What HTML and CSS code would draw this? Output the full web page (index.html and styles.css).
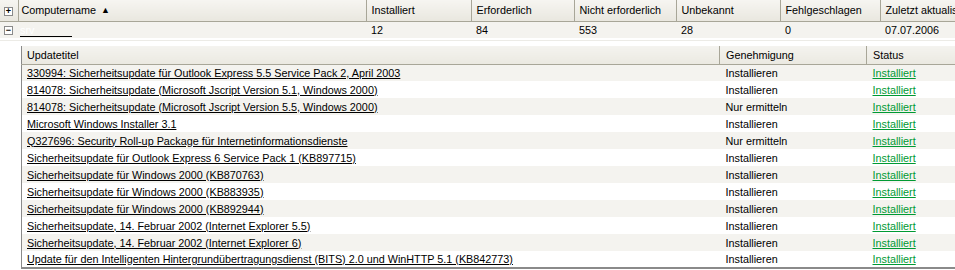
FILE: index.html
```html
<!DOCTYPE html>
<html lang="de">

<head>
  <meta charset="UTF-8">
  <title>Computer</title>
  <link rel="stylesheet" href="styles.css">
</head>

<body>
  <table class="grid">
    <colgroup>
      <col class="c-icon">
      <col class="c-name">
      <col class="c-inst">
      <col class="c-req">
      <col class="c-notreq">
      <col class="c-unknown">
      <col class="c-failed">
      <col class="c-date">
    </colgroup>
    <thead>
      <tr>
        <th class="icon"><span class="box">+</span></th>
        <th>Computername<span class="sort">&#9650;</span></th>
        <th>Installiert</th>
        <th>Erforderlich</th>
        <th>Nicht erforderlich</th>
        <th>Unbekannt</th>
        <th>Fehlgeschlagen</th>
        <th>Zuletzt aktualisiert</th>
      </tr>
    </thead>
    <tbody>
      <tr class="computer">
        <td class="icon"><span class="box">&minus;</span></td>
        <td><a class="hidden-name" href="#">srv</a></td>
        <td>12</td>
        <td>84</td>
        <td>553</td>
        <td>28</td>
        <td>0</td>
        <td>07.07.2006</td>
      </tr>
    </tbody>
  </table>

  <div class="details">
    <table class="updates">
      <colgroup>
        <col class="u-title">
        <col class="u-approval">
        <col class="u-status">
      </colgroup>
      <thead>
        <tr>
          <th>Updatetitel</th>
          <th>Genehmigung</th>
          <th>Status</th>
        </tr>
      </thead>
      <tbody>
        <tr><td><a href="#">330994: Sicherheitsupdate für Outlook Express 5.5 Service Pack 2, April 2003</a></td><td>Installieren</td><td><a class="ok" href="#">Installiert</a></td></tr>
        <tr><td><a href="#">814078: Sicherheitsupdate (Microsoft Jscript Version 5.1, Windows 2000)</a></td><td>Installieren</td><td><a class="ok" href="#">Installiert</a></td></tr>
        <tr><td><a href="#">814078: Sicherheitsupdate (Microsoft Jscript Version 5.5, Windows 2000)</a></td><td>Nur ermitteln</td><td><a class="ok" href="#">Installiert</a></td></tr>
        <tr><td><a href="#">Microsoft Windows Installer 3.1</a></td><td>Installieren</td><td><a class="ok" href="#">Installiert</a></td></tr>
        <tr><td><a href="#">Q327696: Security Roll-up Package für Internetinformationsdienste</a></td><td>Nur ermitteln</td><td><a class="ok" href="#">Installiert</a></td></tr>
        <tr><td><a href="#">Sicherheitsupdate für Outlook Express 6 Service Pack 1 (KB897715)</a></td><td>Installieren</td><td><a class="ok" href="#">Installiert</a></td></tr>
        <tr><td><a href="#">Sicherheitsupdate für Windows 2000 (KB870763)</a></td><td>Installieren</td><td><a class="ok" href="#">Installiert</a></td></tr>
        <tr><td><a href="#">Sicherheitsupdate für Windows 2000 (KB883935)</a></td><td>Installieren</td><td><a class="ok" href="#">Installiert</a></td></tr>
        <tr><td><a href="#">Sicherheitsupdate für Windows 2000 (KB892944)</a></td><td>Installieren</td><td><a class="ok" href="#">Installiert</a></td></tr>
        <tr><td><a href="#">Sicherheitsupdate, 14. Februar 2002 (Internet Explorer 5.5)</a></td><td>Installieren</td><td><a class="ok" href="#">Installiert</a></td></tr>
        <tr><td><a href="#">Sicherheitsupdate, 14. Februar 2002 (Internet Explorer 6)</a></td><td>Installieren</td><td><a class="ok" href="#">Installiert</a></td></tr>
        <tr><td><a href="#">Update für den Intelligenten Hintergrundübertragungsdienst (BITS) 2.0 und WinHTTP 5.1 (KB842773)</a></td><td>Installieren</td><td><a class="ok" href="#">Installiert</a></td></tr>
      </tbody>
    </table>
  </div>
</body>

</html>
```

FILE: styles.css
```css
* {
  box-sizing: border-box;
}
body {
  width: 955px;
  height: 270px;
  margin: 0;
  overflow: hidden;
  background: #fff;
  color: #000;
  font-family: "Liberation Sans", Arial, sans-serif;
  font-size: 10.8px;
}
a {
  color: #000;
  text-decoration: underline;
}
table {
  border-collapse: collapse;
  table-layout: fixed;
}
th,
td {
  padding: 0 0 0 6px;
  white-space: nowrap;
  overflow: hidden;
  text-align: left;
  font-weight: normal;
}
th {
  background: linear-gradient(#f4f3ef, #ebe9e1);
}
th + th {
  border-left: 1px solid #a8a698;
}

/* computer grid */
.grid {
  width: 1000px;
}
.c-icon { width: 18px; }
.c-name { width: 348px; }
.c-inst { width: 105px; }
.c-req { width: 103px; }
.c-notreq { width: 102px; }
.c-unknown { width: 104px; }
.c-failed { width: 100px; }
.c-date { width: 120px; }
.grid th {
  height: 21px;
  border-bottom: 1px solid #a8a698;
  padding-left: 5px;
  background: linear-gradient(#f6f5f1, #e9e7df);
}
.grid th.icon,
.grid td.icon {
  padding: 0 0 0 4px;
}
.grid th:nth-child(2) {
  padding-left: 3px;
}
.grid td {
  height: 17px;
  padding-left: 5px;
  background: #f4f3ef;
}
.grid td:nth-child(2) {
  padding-left: 2px;
}
.box {
  display: inline-flex;
  align-items: center;
  justify-content: center;
  width: 9px;
  height: 9px;
  border: 1px solid #8a8a8a;
  background: #fff;
  font-size: 9px;
  line-height: 1;
  font-weight: bold;
  color: #000;
  vertical-align: middle;
}
.sort {
  font-size: 9px;
  margin-left: 5px;
  vertical-align: 1px;
}
.hidden-name {
  display: inline-block;
  width: 52px;
  height: 13px;
  color: #fff;
  text-decoration: none;
  border-bottom: 1px solid #000;
  vertical-align: middle;
}

/* update list */
.details {
  margin-top: 2px;
  border-top: 1px solid #ecebe6;
  padding: 5px 0 0 21px;
}
.updates {
  width: 1000px;
  border-left: 1px solid #8a8a8a;
  border-bottom: 2px solid #8a8a8a;
}
.u-title { width: 698px; }
.u-approval { width: 147px; }
.u-status { width: 155px; }
.updates th {
  height: 18px;
  border-bottom: 1px solid #a8a698;
}
.updates td {
  height: 17px;
}
.updates th:first-child,
.updates td:first-child {
  padding-left: 5px;
}
.updates tbody tr:nth-child(odd) td {
  background: #f4f3ef;
}
a.ok {
  color: #009a33;
}
```
